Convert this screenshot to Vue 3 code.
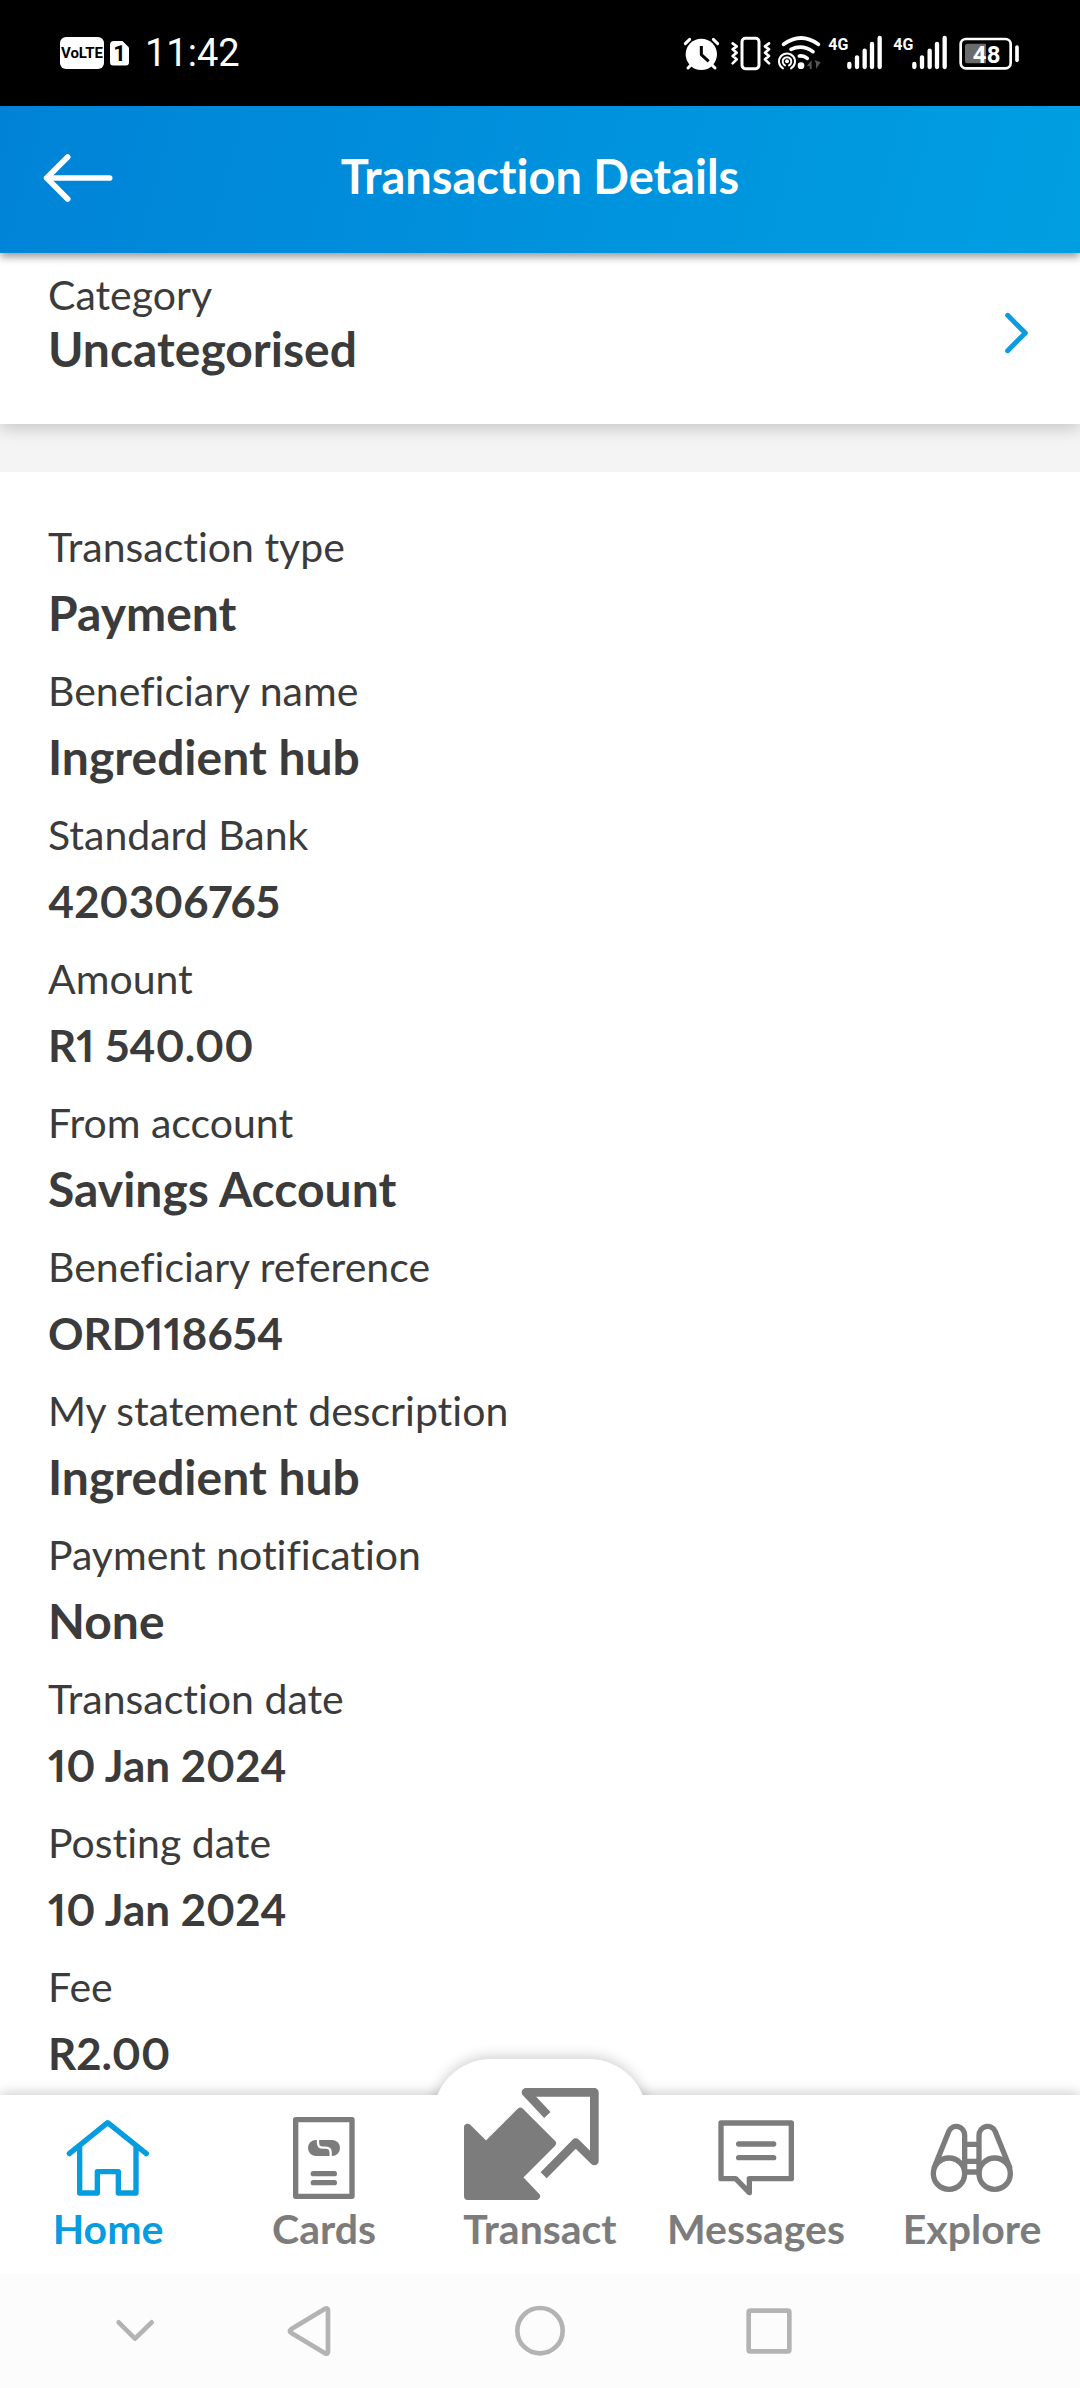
<script setup>
const fields = [
  { label: 'Transaction type', value: 'Payment' },
  { label: 'Beneficiary name', value: 'Ingredient hub' },
  { label: 'Standard Bank', value: '420306765', numeric: true },
  { label: 'Amount', value: 'R1 540.00', numeric: true },
  { label: 'From account', value: 'Savings Account' },
  { label: 'Beneficiary reference', value: 'ORD118654', numeric: true },
  { label: 'My statement description', value: 'Ingredient hub' },
  { label: 'Payment notification', value: 'None' },
  { label: 'Transaction date', value: '10 Jan 2024', numeric: true },
  { label: 'Posting date', value: '10 Jan 2024', numeric: true },
  { label: 'Fee', value: 'R2.00', numeric: true },
]
</script>

<template>
  <div class="screen">
    <div class="status">
      <div class="status-left">
        <span class="volte">VoLTE</span>
        <span class="sim">1</span>
        <time class="clock">11:42</time>
      </div>
      <div class="status-right">
        <svg width="44" height="42" viewBox="66 96 132 126" aria-hidden="true">
          <circle cx="124" cy="163" r="47" fill="#fff" />
          <path d="M76 131L89 118M173 131L160 118M84 204L94 194M165 204L155 194" stroke="#fff" stroke-width="9" stroke-linecap="round" />
          <path d="M124 138V164L146 184" fill="none" stroke="#000" stroke-width="9" />
        </svg>
        <svg width="48" height="42" viewBox="198 96 144 126" fill="none" stroke="#fff" aria-hidden="true">
          <rect x="246" y="115" width="51" height="91" rx="10" stroke-width="9" />
          <path d="M218 130L230 139L218 148L230 158L218 168L230 178L218 190M327 130L315 139L327 148L315 158L327 168L315 178L327 190" stroke-width="8" stroke-linecap="round" stroke-linejoin="round" />
        </svg>
        <svg width="50" height="42" viewBox="342 96 150 126" fill="none" aria-hidden="true">
          <g stroke="#fff" stroke-width="11" stroke-linecap="round">
            <path d="M371 133Q423 95 475 133" />
            <path d="M393 148Q427 132 459 155" />
            <path d="M418 168Q431 166 442 175" />
          </g>
          <circle cx="423" cy="197" r="10" fill="#fff" />
          <circle cx="381" cy="184" r="6" fill="#fff" />
          <path d="M375 196A13 13 0 1 1 387 196M369 205A24 24 0 1 1 393 205" stroke="#fff" stroke-width="6" stroke-linecap="round" />
          <path d="M455 180V207H449V199H440ZM463 180L482 187L468 207V190Z" fill="#555" />
        </svg>
        <svg v-for="n in 2" :key="n" width="65" height="42" viewBox="492 96 195 126" aria-hidden="true">
          <text class="network" x="505" y="149" font-size="48">4G</text>
          <path d="M568 192V201M591 172V201M614 152V201M636 132V201M659 114V201" stroke="#fff" stroke-width="13" stroke-linecap="round" />
        </svg>
        <svg width="67" height="42" viewBox="882 96 201 126" role="img" aria-label="Battery 48 percent">
          <rect x="902" y="117" width="150" height="88" rx="16" fill="none" stroke="#fff" stroke-width="8" />
          <path d="M978 131H922Q915 131 915 138V183Q915 190 922 190H978Z" fill="#6b6b6b" />
          <path d="M1071 141V181" stroke="#fff" stroke-width="11" stroke-linecap="round" />
          <text class="battery" x="980" y="188" font-size="72" text-anchor="middle">48</text>
        </svg>
      </div>
    </div>

    <header class="header">
      <button class="back" type="button" aria-label="Back">
        <svg width="72" height="72" viewBox="126 425 216 216" fill="none" stroke="#fff" stroke-width="17" stroke-linecap="round" stroke-linejoin="round">
          <path d="M203 470L140 533L203 596M140 533H329" />
        </svg>
      </button>
      <h1>Transaction Details</h1>
    </header>

    <main>
      <button class="category" type="button">
        <span class="category-text">
          <span class="label">Category</span>
          <span class="value">Uncategorised</span>
        </span>
        <svg width="30" height="48" viewBox="310 174 90 144" fill="none" stroke="#0a9be0" stroke-width="15" stroke-linecap="round" stroke-linejoin="round" aria-hidden="true">
          <path d="M327 193L380 246L327 299" />
        </svg>
      </button>

      <dl class="details">
        <div v-for="field in fields" :key="field.label" class="field">
          <dt class="label">{{ field.label }}</dt>
          <dd class="value" :class="{ numeric: field.numeric }">{{ field.value }}</dd>
        </div>
      </dl>
    </main>

    <nav class="tabs">
      <a class="tab active" href="#home" aria-current="page">
        <svg width="90" height="90" viewBox="189 276 270 270" aria-hidden="true">
          <path d="M208 401L323 308L439 401M239 380V519H292V455H355V519H408V380" />
        </svg>
        Home
      </a>
      <a class="tab" href="#cards">
        <svg width="90" height="90" viewBox="837 276 270 270" aria-hidden="true">
          <rect x="887" y="299" width="169" height="230" />
          <rect class="solid" x="924" y="360" width="96" height="48" rx="24" />
          <path class="split" d="M954 358V368Q954 383 969 383H977Q992 383 992 398V410" />
          <path d="M940 461H1003M940 488H1003" />
        </svg>
        Cards
      </a>
      <a class="tab transact" href="#transact">
        <svg width="160" height="117" viewBox="180 165 480 351" aria-hidden="true">
          <path class="arrow-solid" d="M203 292L258 347L361 244L457 340L355 442L409 499H203Z" />
          <path class="arrow-outline" d="M442 255L378 187H583V393L527 338L431 436" />
        </svg>
        Transact
      </a>
      <a class="tab" href="#messages">
        <svg width="90" height="90" viewBox="153 246 270 270" aria-hidden="true">
          <path d="M183 279H394V446H268V488L227 446H183ZM236 342H341M236 383H341" />
        </svg>
        Messages
      </a>
      <a class="tab" href="#explore">
        <svg width="90" height="90" viewBox="801 246 270 270" aria-hidden="true">
          <circle cx="867" cy="431" r="47" />
          <circle cx="1004" cy="431" r="47" />
          <path d="M823 412L866 305C878 279 914 287 914 317V431M1049 412L1006 305C994 279 957 287 957 317V431M914 343H957M914 394H957M914 426H957" />
        </svg>
        Explore
      </a>
    </nav>

    <div class="system">
      <button type="button" aria-label="Hide keyboard">
        <svg width="56" height="56" viewBox="320 849 168 168"><path d="M355 907L404 956L454 907" /></svg>
      </button>
      <button type="button" aria-label="System back">
        <svg width="56" height="56" viewBox="842 849 168 168"><path d="M872 928L974 866Q983 862 983 871V995Q983 1004 974 1000L872 938Q865 933 872 928Z" /></svg>
      </button>
      <button type="button" aria-label="System home">
        <svg width="56" height="56" viewBox="336 819 168 168"><circle cx="420" cy="902" r="68" /></svg>
      </button>
      <button type="button" aria-label="Recent apps">
        <svg width="56" height="56" viewBox="243 819 168 168"><rect x="266" y="842" width="122" height="122" rx="5" /></svg>
      </button>
    </div>
  </div>
</template>

<style>
body {
  margin: 0;
  background: #fff;
}
</style>

<style scoped>
.screen {
  min-height: 100vh;
  display: flex;
  flex-direction: column;
  font-family: Lato, "Noto Sans", sans-serif;
  font-variant-ligatures: no-common-ligatures;
  font-variant-numeric: proportional-nums;
  color: #3b3b3b;
}

svg {
  display: block;
  flex: none;
}

button {
  margin: 0;
  padding: 0;
  border: 0;
  background: none;
  font-family: inherit;
  font-variant: inherit;
  color: inherit;
  text-align: left;
}

.status {
  display: flex;
  justify-content: space-between;
  align-items: center;
  height: 106px;
  padding: 0 59px 0 60px;
  background: #000;
  color: #fff;
}

.status-left,
.status-right {
  display: flex;
  align-items: center;
}

.volte {
  width: 44px;
  border-radius: 6px;
  background: #fff;
  color: #000;
  font: 700 15px/32px Roboto, sans-serif;
  text-align: center;
}

.sim {
  width: 19px;
  margin-left: 6px;
  border-radius: 4px;
  background: #fff;
  color: #000;
  font: 700 22px/25px Roboto, sans-serif;
  text-align: center;
  clip-path: polygon(0 0, 12px 0, 100% 7px, 100% 100%, 0 100%);
}

.clock {
  margin-left: 16px;
  font: 400 38px/48px Roboto, sans-serif;
}

.network,
.battery {
  fill: #fff;
  font-family: Roboto, sans-serif;
  font-weight: 700;
}

.header {
  position: relative;
  z-index: 1;
  display: grid;
  grid-template-columns: 72px 1fr 72px;
  align-items: center;
  box-sizing: border-box;
  height: 147px;
  padding: 0 42px 4px;
  background: linear-gradient(105deg, #0083d7, #009fe2);
  box-shadow: 0 4px 8px rgba(0, 0, 0, 0.4);
}

h1 {
  margin: 0;
  padding-bottom: 4px;
  color: #fff;
  font-size: 47px;
  line-height: 56px;
  font-weight: 700;
  text-align: center;
}

main {
  flex: 1;
  display: flex;
  flex-direction: column;
  background: #f4f4f4;
}

.category {
  display: flex;
  justify-content: space-between;
  align-items: center;
  width: 100%;
  padding: 15px 48px 26px;
  background: #fff;
  box-shadow: 0 4px 16px rgba(0, 0, 0, 0.2);
}

.category-text {
  display: flex;
  flex-direction: column;
  padding-bottom: 22px;
}

.label {
  font-size: 41px;
  line-height: 66px;
}

.value {
  margin: 0;
  font-size: 48px;
  line-height: 66px;
  font-weight: 700;
}

.value.numeric {
  font-size: 44px;
}

.category .label,
.category .value {
  line-height: 54px;
}

.details {
  flex: 1;
  display: flex;
  flex-direction: column;
  gap: 12px;
  margin: 48px 0 0;
  padding: 42px 48px 0;
  background: #fff;
}

.tabs {
  position: relative;
  display: grid;
  grid-template-columns: repeat(5, 1fr);
  align-items: end;
  padding: 17px 0 18px;
  background: #fff;
  box-shadow: 0 -2px 12px rgba(0, 0, 0, 0.2);
}

.tabs::before {
  content: "";
  position: absolute;
  top: -36px;
  left: 50%;
  width: 214px;
  height: 60px;
  margin-left: -107px;
  border-radius: 58px 58px 0 0;
  background: #fff;
  box-shadow: 0 -2px 14px rgba(0, 0, 0, 0.2);
  clip-path: inset(-24px -24px 24px -24px);
}

.tab {
  position: relative;
  display: flex;
  flex-direction: column;
  align-items: center;
  color: #7c7c7c;
  font-size: 41px;
  line-height: 54px;
  font-weight: 700;
  text-decoration: none;
}

.tab.active {
  color: #069de0;
}

.tab svg {
  fill: none;
  stroke: currentColor;
  stroke-width: 16;
  stroke-linecap: round;
  stroke-linejoin: round;
}

.tab.transact {
  margin-top: -27px;
}

.tab .solid {
  fill: currentColor;
  stroke: none;
}

.tab .split {
  stroke: #fff;
  stroke-width: 7;
}

.tab .arrow-solid {
  fill: currentColor;
  stroke-width: 22;
}

.tab .arrow-outline {
  stroke-width: 26;
  stroke-linecap: butt;
}

.system {
  position: relative;
  display: grid;
  grid-template-columns: 48fr 174fr 174fr 288fr 170fr 226fr;
  justify-items: center;
  align-items: center;
  height: 114px;
  background: #fcfcfc;
}

.system button:first-child {
  grid-column-start: 2;
}

.system svg {
  fill: none;
  stroke: #b3b3b3;
  stroke-width: 14;
  stroke-linecap: round;
  stroke-linejoin: round;
}
</style>
